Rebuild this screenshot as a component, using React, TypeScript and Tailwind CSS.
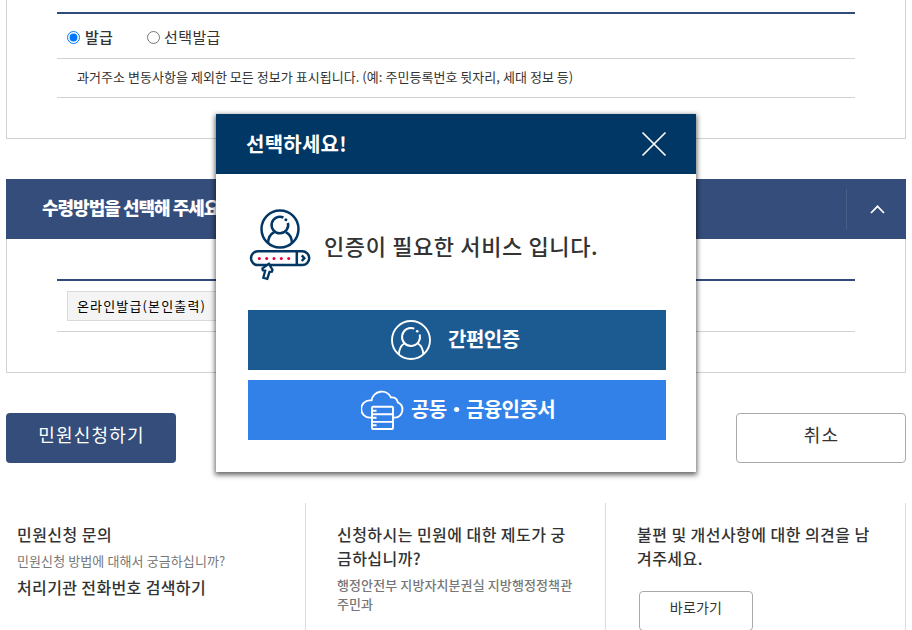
import React from "react";

type IconProps = {
  className?: string;
};

function UserCircleIcon({ className }: IconProps) {
  return (
    <svg className={className} viewBox="0 0 40 40" fill="none" stroke="currentColor" strokeWidth="1.9">
      <circle cx="20" cy="20" r="19" />
      <path d="M23.3 8.6A9 9 0 1 0 28.7 14.6" />
      <path d="M13.6 23.2C9.6 25.6 8 29.5 7.9 34.6M26.6 23.2C30.6 25.6 32.2 29.5 32.3 34.6" />
      <circle cx="26.2" cy="11.3" r="1.3" fill="currentColor" stroke="none" />
    </svg>
  );
}

function CloudServerIcon() {
  return (
    <svg className="h-10 w-[43px]" viewBox="0 0 43 40" fill="none" stroke="white" strokeWidth="1.9">
      <path d="M11 27.6H8.8A8.6 8.6 0 0 1 8.8 10.4H10.6A10.3 10.3 0 0 1 30 7.4Q35.8 7 36.8 12.4A8 8 0 0 1 34 27.6H32.6" />
      <rect x="11" y="16.7" width="21" height="22.3" rx="1" />
      <path d="M11 24.3h21M11 31.9h21M11 20.7h4.5M11 27.7h4.5M11 35.2h4.5" />
    </svg>
  );
}

function LoginIcon() {
  return (
    <svg className="h-[72px] w-[62px]" viewBox="0 0 62 72" fill="none" stroke="#003764" strokeWidth="2.5">
      <circle cx="31" cy="20" r="18.5" />
      <path d="M34.4 8.5A8.3 8.3 0 1 0 38.9 13.9" />
      <path d="M25.2 23.1C21 25.2 19.1 29.1 19.1 34.2M36.8 23.1C41 25.2 42.9 29.1 42.9 34.2" />
      <circle cx="36.9" cy="10.8" r="1.5" fill="#003764" stroke="none" />
      <rect x="2" y="42.3" width="58.2" height="13.8" rx="6.9" />
      <path d="M47.8 42v14M52.8 46.4l2.5 2.8-2.5 2.8" />
      {[10.3, 17.7, 25, 32.3, 39.7].map((cx) => (
        <circle key={cx} cx={cx} cy="49.4" r="1.5" fill="#e5003b" stroke="none" />
      ))}
      <path
        d="M20 54.8L13.4 59.4L13.8 61.3L16.2 61.7L14.3 68.8L18.3 69.9L20.5 62.9L22.9 62.6L23.5 60.8Z"
        fill="white"
        strokeWidth="2.3"
      />
    </svg>
  );
}

function IssueSection() {
  return (
    <section className="h-[139px] border-x border-b border-[#d2d2d2] px-[50px] pt-3">
      <div className="border-t-2 border-[#304a7b]">
        <div className="flex h-[45px] items-center border-b border-[#d2d2d2] pt-0.5 pl-2.5 text-[15px] text-[#333]">
          <label className="flex items-center gap-[5px] font-medium">
            <input type="radio" name="issue" defaultChecked className="m-0 size-[13px]" />
            <span className="tracking-[0.2px]">발급</span>
          </label>
          <label className="ml-[34px] flex items-center gap-1">
            <input type="radio" name="issue" className="m-0 size-[13px]" />
            <span className="tracking-[0.4px]">선택발급</span>
          </label>
        </div>
        <p className="h-[39px] border-b border-[#d2d2d2] pl-5 text-[13px] leading-[36px] tracking-[0.04px] text-[#333]">
          과거주소 변동사항을 제외한 모든 정보가 표시됩니다. (예: 주민등록번호 뒷자리, 세대 정보 등)
        </p>
      </div>
    </section>
  );
}

function ReceiveSection() {
  return (
    <section className="mt-10">
      <header className="flex h-[60px] items-center bg-[#344d7a] pl-9 text-white">
        <h2 className="-mt-[3px] text-[18px] font-black tracking-[-1px]">수령방법을 선택해 주세요</h2>
        <button type="button" className="ml-auto flex h-10 w-[60px] items-center justify-center border-l border-[#485f88] pl-px">
          <svg className="h-[9px] w-[15px]" viewBox="0 0 15 9" fill="none" stroke="white" strokeWidth="1.7">
            <path d="M1 8l6.5-6.7L14 8" />
          </svg>
        </button>
      </header>
      <div className="h-[134px] border-x border-b border-[#d2d2d2] px-[50px] pt-10">
        <div className="h-[53px] border-t-2 border-b border-t-[#304a7b] border-b-[#d2d2d2] pt-2.5 pl-2.5">
          <div className="h-[30px] w-[200px] border border-[#dadada] bg-[#f4f4f4] pl-[9px] text-[13px] leading-[28px] tracking-[1.15px] text-black">
            온라인발급(본인출력)
          </div>
        </div>
      </div>
    </section>
  );
}

function HelpColumns() {
  return (
    <div className="mt-10 flex h-[127px] text-base leading-6 font-medium tracking-[0.45px] text-[#333]">
      <div className="w-[300px] border-r border-[#dcdcdc] pt-[19px] pl-[11px]">
        <h3>민원신청 문의</h3>
        <p className="mt-[5px] text-[13px] leading-5 font-normal tracking-[0.1px] text-[#777]">
          민원신청 방법에 대해서 궁금하십니까?
        </p>
        <p className="mt-1 tracking-[0.37px]">처리기관 전화번호 검색하기</p>
      </div>
      <div className="w-[300px] border-r border-[#dcdcdc] pt-[19px] pl-[31px]">
        <h3>
          신청하시는 민원에 대한 제도가 궁
          <br />
          금하십니까?
        </h3>
        <p className="mt-[5px] text-[13px] leading-[19px] tracking-[0.1px] text-[#777]">
          행정안전부 지방자치분권실 지방행정정책관
          <br />
          주민과
        </p>
      </div>
      <div className="w-[300px] border-r border-[#dcdcdc] pt-[19px] pl-[31px]">
        <h3>
          불편 및 개선사항에 대한 의견을 남
          <br />
          겨주세요.
        </h3>
        <button
          type="button"
          className="mt-[21px] ml-0.5 h-10 w-[114px] rounded border border-[#aaa] bg-white pb-2 text-sm font-normal tracking-[0.2px]"
        >
          바로가기
        </button>
      </div>
    </div>
  );
}

function AuthDialog() {
  return (
    <div
      role="dialog"
      className="absolute top-[114px] left-[216px] h-[358px] w-[480px] bg-white shadow-[0_2px_5px_1px_rgba(0,0,0,0.6)]"
    >
      <header className="flex h-[60px] items-center justify-between bg-[#003764] pr-[29px] pl-[30px] text-white">
        <h2 className="text-xl font-bold tracking-[0.25px]">선택하세요!</h2>
        <button type="button" aria-label="닫기">
          <svg className="size-[26px]" viewBox="0 0 26 26" fill="none" stroke="white" strokeWidth="1.7">
            <path d="M1.5 1.5l23 23M24.5 1.5l-23 23" />
          </svg>
        </button>
      </header>
      <div className="flex items-start pt-[35px] pl-[33px]">
        <LoginIcon />
        <p className="mt-5 ml-[13px] text-[22px] leading-8 font-medium tracking-[0.62px] text-[#333]">
          인증이 필요한 서비스 입니다.
        </p>
      </div>
      <div className="mt-[29px] ml-8 flex w-[418px] flex-col gap-2.5 text-xl font-bold tracking-[-0.5px] text-white">
        <button type="button" className="flex h-[60px] items-center bg-[#1c5a92] pl-[143px]">
          <UserCircleIcon className="size-10" />
          <span className="-mt-0.5 ml-[17px]">간편인증</span>
        </button>
        <button type="button" className="flex h-[60px] items-center bg-[#3281e9] pl-[113px]">
          <CloudServerIcon />
          <span className="-mt-0.5 ml-[7px] tracking-[-0.6px]">공동・금융인증서</span>
        </button>
      </div>
    </div>
  );
}

export default function App() {
  return (
    <div className="relative h-[630px] w-[912px] overflow-hidden bg-white pl-1.5 font-['Noto_Sans_CJK_KR',sans-serif]">
      <main className="w-[900px]">
        <IssueSection />
        <ReceiveSection />
        <div className="mt-10 flex h-[50px] justify-between text-[18px] tracking-[1.2px]">
          <button type="button" className="w-[170px] rounded bg-[#344d7a] pb-2 pl-px text-white">
            민원신청하기
          </button>
          <button type="button" className="w-[170px] rounded border border-[#aaa] bg-white pb-2 pl-px text-[#333]">
            취소
          </button>
        </div>
        <HelpColumns />
      </main>
      <AuthDialog />
    </div>
  );
}
